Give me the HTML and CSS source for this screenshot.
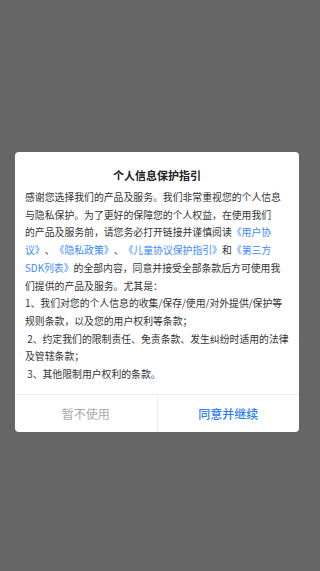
FILE: index.html
```html
<!DOCTYPE html>
<html lang="zh-CN">
<head>
<meta charset="utf-8">
<link rel="stylesheet" href="styles.css">
</head>
<body>
<div class="screen">
  <div class="dialog">
    <div class="title">个人信息保护指引</div>
    <div class="content">
      <p class="para">感谢您选择我们的产品及服务。我们非常重视您的个人信息<br>与隐私保护。为了更好的保障您的个人权益，在使用我们<br>的产品及服务前，请您务必打开链接并谨慎阅读<span class="link">《用户协<br>议》</span>、<span class="link">《隐私政策》</span>、<span class="link">《儿童协议保护指引》</span>和<span class="link">《第三方<br>SDK列表》</span>的全部内容，同意并接受全部条款后方可使用我<br>们提供的产品及服务。尤其是：</p>
      <p class="para">1、我们对您的个人信息的收集/保存/使用/对外提供/保护等<br>规则条款，以及您的用户权利等条款；</p>
      <p class="para">&nbsp;2、约定我们的限制责任、免责条款、发生纠纷时适用的法律<br>及管辖条款；</p>
      <p class="para">&nbsp;3、其他限制用户权利的条款。</p>
    </div>
    <div class="actions">
      <div class="btn btn-cancel">暂不使用</div>
      <div class="btn btn-ok">同意并继续</div>
    </div>
  </div>
</div>
</body>
</html>
```
FILE: styles.css
```css
html, body {
  margin: 0;
  padding: 0;
  background: #666666;
}
body {
  font-family: "Noto Sans CJK SC", "Noto Sans", sans-serif;
  width: 320px;
  height: 571px;
  overflow: hidden;
}
.screen {
  height: 571px;
  display: flex;
  flex-direction: column;
  justify-content: flex-start;
  padding-top: 152px;
  box-sizing: border-box;
}
.dialog {
  margin-left: 15px;
  width: 284px;
  background: #ffffff;
  border-radius: 4px;
  overflow: hidden;
}
.title {
  padding-top: 15px;
  height: 16px;
  line-height: 16px;
  font-size: 11px;
  font-weight: bold;
  color: #222222;
  text-align: center;
}
.content {
  padding: 6px 10px 10px 10px;
  font-size: 9.85px;
  line-height: 17.7px;
  color: #333333;
  text-spacing-trim: space-all;
}
.para {
  margin: 0;
  white-space: nowrap;
}
.link {
  color: #3d8af7;
}
.actions {
  display: flex;
  border-top: 1px solid #eeeeee;
  height: 37px;
}
.btn {
  flex: 1;
  display: flex;
  align-items: center;
  justify-content: center;
  font-size: 12px;
}
.btn-cancel {
  color: #aaaaaa;
  border-right: 1px solid #eeeeee;
}
.btn-ok {
  color: #2f7ff0;
  font-weight: 500;
}
```
